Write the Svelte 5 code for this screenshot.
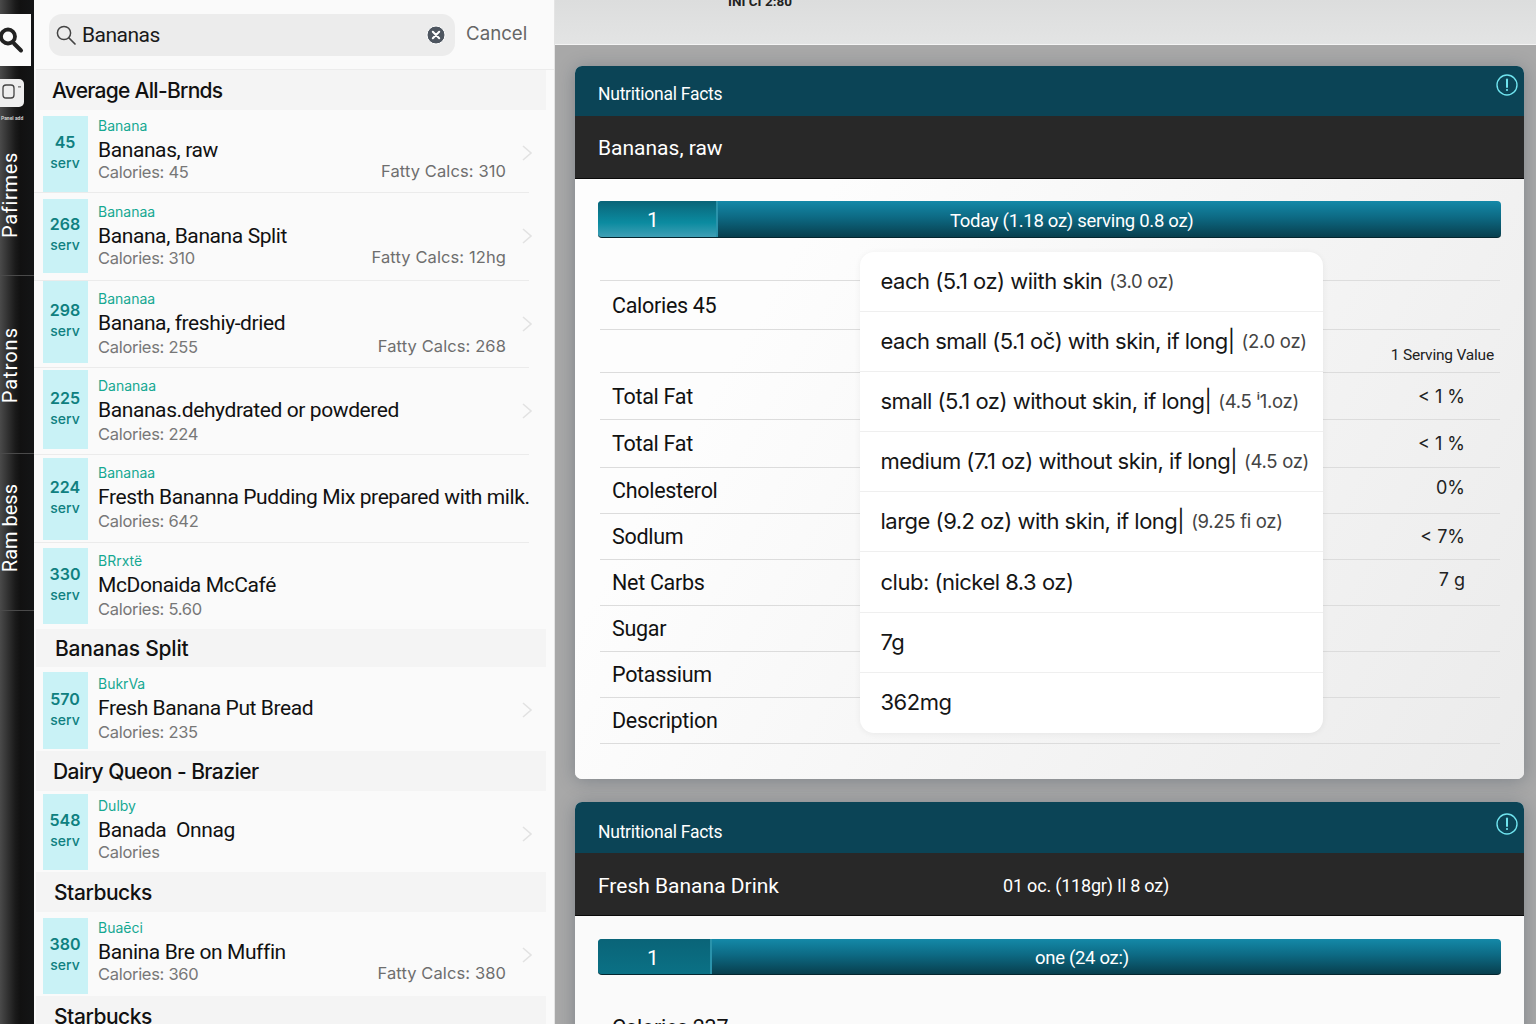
<script>
  const groups = [
    { title: 'Average All-Brnds', cls: 'h-first', rows: [
      { n: 45, b: 'Banana', name: 'Bananas, raw', cal: 'Calories: 45', fat: 'Fatty Calcs: 310', H: 83, t: 6, th: 76, p: 2, tight: true },
      { n: 268, b: 'Bananaa', name: 'Banana, Banana Split', cal: 'Calories: 310', fat: 'Fatty Calcs: 12hg', H: 88, t: 6, th: 74, p: 5, tight: true },
      { n: 298, b: 'Bananaa', name: 'Banana, freshiy-dried', cal: 'Calories: 255', fat: 'Fatty Calcs: 268', H: 87, t: 0, th: 82, p: 10 },
      { n: 225, b: 'Dananaa', name: 'Bananas.dehydrated or powdered', cal: 'Calories: 224', fat: '', H: 87, t: 2, th: 79, p: 8 },
      { n: 224, b: 'Bananaa', name: 'Fresth Bananna Pudding Mix prepared with milk.', cal: 'Calories: 642', fat: '', H: 88, t: 3, th: 82, p: 7 },
      { n: 330, b: 'BRrxtë', name: 'McDonaida McCafé', cal: 'Calories: 5.60', fat: '', H: 86, t: 5, th: 76, p: 5, last: true }
    ] },
    { title: 'Bananas Split', cls: 'h-split', rows: [
      { n: 570, b: 'BukrVa', name: 'Fresh Banana Put Bread', cal: 'Calories: 235', fat: '', H: 84, t: 5, th: 77, p: 4, last: true }
    ] },
    { title: 'Dairy Queon - Brazier', cls: 'h-dq', rows: [
      { n: 548, b: 'Dulby', name: 'Banada  Onnag', cal: 'Calories', fat: '', H: 81, t: 3, th: 76, p: 4, last: true, tight: true }
    ] },
    { title: 'Starbucks', cls: 'h-star', rows: [
      { n: 380, b: 'Buaēci', name: 'Banina Bre on Muffin', cal: 'Calories: 360', fat: 'Fatty Calcs: 380', H: 84, t: 6, th: 76, p: 2, last: true, tight: true }
    ] },
    { title: 'Starbucks', cls: 'h-star', rows: [] }
  ];

  const table = [
    { l: 'Calories 45', v: '', c: 'r-cal' },
    { l: '', v: '1 Serving Value', c: 'r-head' },
    { l: 'Total Fat', v: '< 1 %', c: 'r-a' },
    { l: 'Total Fat', v: '< 1 %', c: 'r-b' },
    { l: 'Cholesterol', v: '0%', c: 'r-up' },
    { l: 'Sodlum', v: '< 7%', c: '' },
    { l: 'Net Carbs', v: '7 g', c: 'r-up' },
    { l: 'Sugar', v: '', c: '' },
    { l: 'Potassium', v: '', c: '' },
    { l: 'Description', v: '', c: '' }
  ];

  const pop = [
    ['each (5.1 oz) wiith skin', '(3.0 oz)'],
    ['each small (5.1 oč) with skin, if long|', '(2.0 oz)'],
    ['small (5.1 oz) without skin, if long|', '(4.5 ⁱ1.oz)'],
    ['medium (7.1 oz) without skin, if long|', '(4.5 oz)'],
    ['large (9.2 oz) with skin, if long|', '(9.25 fi oz)'],
    ['club: (nickel 8.3 oz)', ''],
    ['7g', ''],
    ['362mg', '']
  ];
</script>

{#snippet info()}
  <svg class="info" viewBox="0 0 24 24" width="24" height="24" aria-hidden="true">
    <circle cx="12" cy="12" r="10" fill="none" stroke="#6fe3ee" stroke-width="1.4" />
    <path d="M12 6.5v7.5" stroke="#6fe3ee" stroke-width="2" stroke-linecap="round" />
    <circle cx="12" cy="17" r="1.1" fill="#6fe3ee" />
  </svg>
{/snippet}

<div class="page">
  <nav class="rail">
    <div class="rail-search">
      <svg viewBox="0 0 31 52" width="31" height="52" aria-hidden="true">
        <circle cx="8" cy="22.5" r="7" fill="none" stroke="#222" stroke-width="3.8" />
        <path d="M14 29.5l7 7" stroke="#222" stroke-width="4" stroke-linecap="round" />
      </svg>
    </div>
    <div class="rail-cam">
      <svg viewBox="0 0 24 28" width="24" height="28" aria-hidden="true">
        <rect x="3" y="6" width="11" height="13" rx="3" fill="none" stroke="#444" stroke-width="1.3" />
        <rect x="18" y="7" width="3" height="1.6" fill="#888" />
      </svg>
    </div>
    <div class="rail-tiny">Panel add</div>
    <div class="rail-sec s1"><span>Pafirmes</span></div>
    <div class="rail-sec s2"><span>Patrons</span></div>
    <div class="rail-sec s3"><span>Ram bess</span></div>
  </nav>

  <aside class="side">
    <div class="searchrow">
      <div class="pill">
        <svg viewBox="0 0 22 22" width="22" height="22" aria-hidden="true">
          <circle cx="9" cy="9" r="6.6" fill="none" stroke="#444" stroke-width="1.5" />
          <path d="M14 14l6 6" stroke="#444" stroke-width="1.7" stroke-linecap="round" />
        </svg>
        <span class="q">Bananas</span>
        <svg class="clear" viewBox="0 0 20 20" width="20" height="20" aria-hidden="true">
          <circle cx="10" cy="10" r="9" fill="#4e5660" stroke="#fff" stroke-width="1" />
          <path d="M6.8 6.8l6.4 6.4M13.2 6.8l-6.4 6.4" stroke="#fff" stroke-width="2" stroke-linecap="round" />
        </svg>
      </div>
      <span class="cancel">Cancel</span>
    </div>

    {#each groups as g}
      <h2 class="ghead {g.cls}">{g.title}</h2>
      {#each g.rows as r}
        <div class="row" class:last={r.last} style="height:{r.H}px;padding-top:{r.t}px">
          <div class="thumb" style="height:{r.th}px">
            <b>{r.n}</b>
            <span>serv</span>
          </div>
          <div class="txt" style="padding-top:{r.p}px">
            <div class="brand">{r.b}</div>
            <div class="name">{r.name}</div>
            <div class="sub" class:tight={r.tight}>
              <span>{r.cal}</span>
              {#if r.fat}<span class="fat">{r.fat}</span>{/if}
            </div>
          </div>
          {#if !r.name.startsWith('Fresth') && !r.name.startsWith('McD')}
            <svg class="chev" viewBox="0 0 12 18" width="12" height="18" aria-hidden="true">
              <path d="M2 2l8 7-8 7" fill="none" stroke="#e2e2e2" stroke-width="1.6" />
            </svg>
          {/if}
        </div>
      {/each}
    {/each}
  </aside>

  <main class="main">
    <header class="top"><span class="clock">INI CI 2:80</span></header>
    <div class="cards">
      <section class="card">
        <div class="teal"><span>Nutritional Facts</span>{@render info()}</div>
        <div class="dark one"><span>Bananas, raw</span></div>
        <div class="body">
          <div class="bar">
            <div class="seg">1</div>
            <div class="bar-label">Today (1.18 oz) serving 0.8 oz)</div>
          </div>
          <div class="tbl">
            {#each table as t}
              <div class="tr {t.c}"><span class="tl">{t.l}</span><span class="tv">{t.v}</span></div>
            {/each}
          </div>
          <div class="pop">
            {#each pop as p}
              <div class="pi"><span>{p[0]}</span>{#if p[1]}<small>{p[1]}</small>{/if}</div>
            {/each}
          </div>
        </div>
      </section>

      <section class="card second">
        <div class="teal t2"><span>Nutritional Facts</span>{@render info()}</div>
        <div class="dark two"><span class="dn">Fresh Banana Drink</span><span class="ds">01 oc. (118gr) Il 8 oz)</span></div>
        <div class="body">
          <div class="bar">
            <div class="seg s2">1</div>
            <div class="bar-label l2">one (24 oz:)</div>
          </div>
          <div class="peek">Calories 237</div>
        </div>
      </section>
    </div>
  </main>
</div>

<style>
  :global(body) { margin: 0; background: #a8a8a8; }
  .page {
    display: flex; width: 1536px; height: 1024px; overflow: hidden;
    font-family: Roboto, "Liberation Sans", sans-serif; color: #111;
  }

  /* rail */
  .rail {
    width: 34px; flex: none; position: relative; display: flex; flex-direction: column;
    background: linear-gradient(90deg, #4a4a4a 0, #1a1a1a 45%, #111 60%, #141516 100%);
    padding-top: 14px; box-sizing: border-box; color: #fff;
  }
  .rail-search { width: 31px; height: 52px; background: #fbfbfb; overflow: hidden; }
  .rail-search svg { display: block; }
  .rail-cam { width: 24px; height: 28px; margin-top: 13px; background: #eee; border-radius: 0 5px 5px 0; }
  .rail-cam svg { display: block; }
  .rail-tiny { font-size: 5px; line-height: 6px; margin-top: 8px; padding-left: 1px; white-space: nowrap; color: #ccc; font-weight: 700; }
  .rail-sec {
    border-bottom: 1px solid #4a4a4a; display: flex; align-items: flex-end; box-sizing: border-box;
  }
  .rail-sec span {
    writing-mode: vertical-rl; transform: rotate(180deg); font-size: 20px; line-height: 20px;
    white-space: nowrap;
  }
  .s1 { height: 155px; padding-bottom: 37px; }
  .s1 span { letter-spacing: 0.7px; }
  .s2 { height: 178px; padding-bottom: 50px; }
  .s2 span { letter-spacing: 1px; }
  .s3 { height: 157px; padding-bottom: 38px; }

  /* sidebar */
  .side { width: 521px; flex: none; background: #fafafa; overflow: hidden; border-right: 1px solid #e4e4e4; box-sizing: border-box; }
  .searchrow {
    height: 70px; margin-left: 2px; box-sizing: border-box; padding: 14px 0 0 13px;
    display: flex; align-items: flex-start; border-bottom: 1px solid #ececec;
  }
  .pill {
    width: 406px; height: 42px; border-radius: 13px; background: #ececec;
    display: flex; align-items: center; box-sizing: border-box; padding: 0 9px 0 6px;
  }
  .q { font-size: 21px; letter-spacing: -0.5px; margin-left: 5px; color: #1a1a1a; flex: 1; }
  .cancel { font-family: Inter, sans-serif; font-size: 18.7px; color: #666; margin: 8px 0 0 11px; }

  .ghead {
    margin: 0; font-family: Inter, sans-serif; font-weight: 500; font-size: 21px; letter-spacing: -0.45px; background: #f4f4f4; color: #111;
    display: flex; align-items: center; padding-left: 16px; box-sizing: border-box; width: 510px; margin-left: 2px;
  }
  .h-first { height: 40px; letter-spacing: -0.72px; }
  .h-split { height: 38px; padding-left: 19px; letter-spacing: -0.2px; }
  .h-dq { height: 40px; padding-left: 17px; letter-spacing: -0.55px; }
  .h-star { height: 40px; padding-left: 18px; }

  .row { position: relative; display: flex; box-sizing: border-box; padding-left: 9px; border-bottom: 1px solid #ebebeb; width: 495px; }
  .row.last { border-bottom: 0; }
  .thumb {
    width: 45px; flex: none; background: #c9f2f6; color: #0f8080; display: flex; flex-direction: column;
    align-items: center; justify-content: center; gap: 3px; padding: 0 1px 3px 0; box-sizing: border-box;
    font-family: Inter, sans-serif;
  }
  .thumb b { font-size: 16px; line-height: 18px; font-weight: 600; }
  .thumb span { font-size: 14px; line-height: 18px; font-weight: 500; }
  .txt { flex: 1; margin-left: 10px; min-width: 0; }
  .brand { font-family: Inter, sans-serif; font-size: 14px; line-height: 16px; color: #16a892; }
  .name { font-size: 21px; line-height: 29px; letter-spacing: -0.4px; color: #111; white-space: pre; margin-top: 2px; }
  .sub { display: flex; justify-content: space-between; align-items: baseline; font-family: Inter, sans-serif; font-size: 16.5px; line-height: 18px; color: #777; letter-spacing: -0.3px; width: 408px; }
  .sub.tight { margin-top: -2px; }
  .fat { font-size: 16.5px; color: #6e6e6e; letter-spacing: 0.1px; position: relative; top: -1px; }
  .chev { position: absolute; left: 487px; top: 34px; }

  /* main */
  .main { flex: 1; min-width: 0; background: #a8a8a8; }
  .top {
    height: 45px; box-sizing: border-box; background: linear-gradient(180deg, #dcdddd, #e3e4e4);
    border-bottom: 1px solid #f4f4f4; position: relative; overflow: hidden;
  }
  .clock { position: absolute; left: 173px; top: -7px; font-size: 13.5px; line-height: 17px; font-weight: 700; color: #222; }
  .cards { padding: 21px 12px 0 20px; display: flex; flex-direction: column; gap: 23px; }
  .card { border-radius: 7px; background: #fafafa; box-shadow: 0 2px 18px rgba(20, 40, 60, .28); overflow: hidden; }
  .teal {
    height: 50px; background: #0b4456; color: #fff; display: flex; align-items: center; justify-content: space-between;
    padding: 6px 5px 0 23px; box-sizing: border-box; font-size: 17.5px; letter-spacing: -0.25px;
  }
  .t2 { height: 51px; padding-top: 8px; }
  .info { margin-top: -19px; }
  .t2 .info { margin-top: -15px; }
  .dark { background: #282828; color: #fff; display: flex; align-items: center; padding-left: 23px; border-bottom: 1px solid #0a0a0a; box-sizing: border-box; font-size: 21px; }
  .one { height: 63px; padding-top: 1px; }
  .two { height: 63px; padding-top: 3px; }
  .dn { width: 405px; flex: none; }
  .ds { font-size: 18px; letter-spacing: -0.2px; }
  .body {
    position: relative; padding: 22px 23px 36px; height: 600px; box-sizing: border-box;
    background: linear-gradient(120deg, #fdfdfd 20%, #ebebeb 100%);
  }
  .second .body { background: #fafafa; height: 200px; padding-top: 23px; }
  .bar {
    height: 37px; border-radius: 4px; overflow: hidden; display: flex; color: #fff;
    background: linear-gradient(180deg, #1489a8, #0d6a84 45%, #083f4e 100%);
    border-bottom: 1px solid #04262f; box-sizing: border-box;
  }
  .second .bar { height: 36px; }
  .seg {
    width: 120px; flex: none; text-align: center; font-size: 21px; line-height: 39px; box-sizing: border-box; padding-right: 8px;
    background: linear-gradient(180deg, #0a6478, #0b8ba0 60%, #3f9fb5); border-right: 2px solid #2a93ab;
  }
  .seg.s2 { width: 114px; padding-right: 2px; line-height: 38px; }
  .bar-label { padding-left: 232px; font-size: 18.5px; line-height: 40px; letter-spacing: -0.3px; white-space: nowrap; }
  .l2 { padding-left: 323px; line-height: 38px; }

  .tbl { margin: 42px 0 0 2px; border-top: 1px solid #ddd; width: 900px; }
  .tr { height: 46px; display: flex; justify-content: space-between; align-items: center; border-bottom: 1px solid #dcdcdc; box-sizing: border-box; padding: 0 35px 0 12px; font-size: 21.5px; letter-spacing: -0.3px; }
  .r-cal { height: 49px; }
  .r-head { height: 43px; padding-right: 6px; align-items: flex-end; padding-bottom: 8px; }
  .r-head .tv { font-family: Roboto, sans-serif; font-size: 15.5px; letter-spacing: -0.2px; }
  .r-a { height: 47px; }
  .r-b { height: 48px; }
  .r-up .tv { margin-top: -6px; }
  .tv { font-family: Inter, sans-serif; font-size: 18px; letter-spacing: 0; color: #222; }

  .pop {
    position: absolute; left: 285px; top: 73px; width: 463px; height: 481px; background: #fff;
    border-radius: 14px; box-shadow: 0 1px 6px rgba(0, 0, 0, .06); display: flex; flex-direction: column; overflow: hidden;
    font-family: Inter, sans-serif;
  }
  .pi {
    height: 60.1px; flex: none; display: flex; align-items: center; gap: 7px; padding: 0 0 1px 20.5px;
    box-sizing: border-box; font-size: 22px; letter-spacing: -0.5px; color: #161616; border-bottom: 1px solid #efefef; white-space: nowrap;
  }
  .pi:last-child { border-bottom: 0; }
  .pi small { font-size: 18.5px; color: #444; letter-spacing: -0.3px; }

  .peek { margin: 40px 0 0 14px; font-size: 21.5px; letter-spacing: -0.3px; }
</style>
